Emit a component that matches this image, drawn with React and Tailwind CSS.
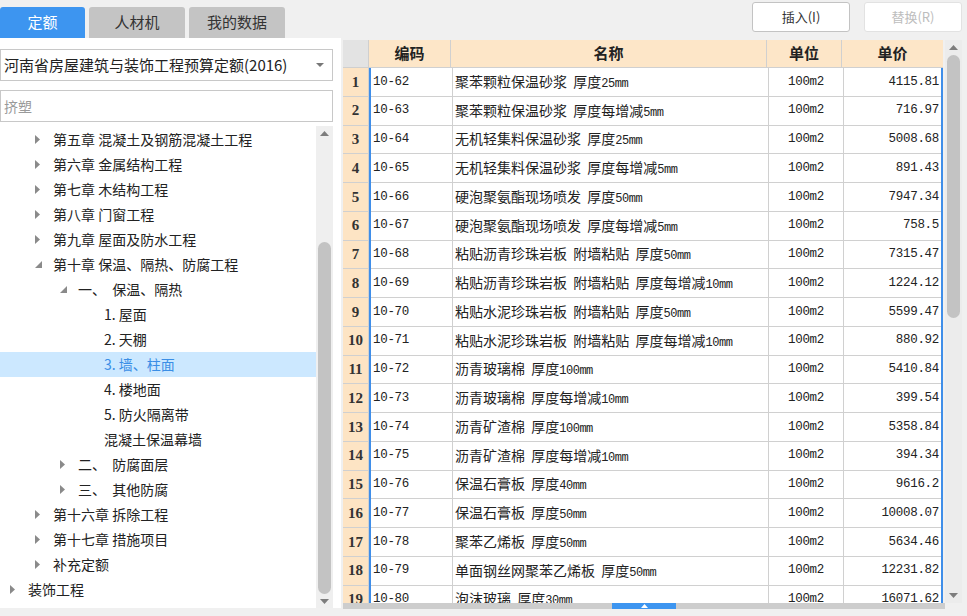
const rows = [
  ['10-62', '聚苯颗粒保温砂浆 厚度25mm', '4115.81'],
  ['10-63', '聚苯颗粒保温砂浆 厚度每增减5mm', '716.97'],
  ['10-64', '无机轻集料保温砂浆 厚度25mm', '5008.68'],
  ['10-65', '无机轻集料保温砂浆 厚度每增减5mm', '891.43'],
  ['10-66', '硬泡聚氨酯现场喷发 厚度50mm', '7947.34'],
  ['10-67', '硬泡聚氨酯现场喷发 厚度每增减5mm', '758.5'],
  ['10-68', '粘贴沥青珍珠岩板 附墙粘贴 厚度50mm', '7315.47'],
  ['10-69', '粘贴沥青珍珠岩板 附墙粘贴 厚度每增减10mm', '1224.12'],
  ['10-70', '粘贴水泥珍珠岩板 附墙粘贴 厚度50mm', '5599.47'],
  ['10-71', '粘贴水泥珍珠岩板 附墙粘贴 厚度每增减10mm', '880.92'],
  ['10-72', '沥青玻璃棉 厚度100mm', '5410.84'],
  ['10-73', '沥青玻璃棉 厚度每增减10mm', '399.54'],
  ['10-74', '沥青矿渣棉 厚度100mm', '5358.84'],
  ['10-75', '沥青矿渣棉 厚度每增减10mm', '394.34'],
  ['10-76', '保温石膏板 厚度40mm', '9616.2'],
  ['10-77', '保温石膏板 厚度50mm', '10008.07'],
  ['10-78', '聚苯乙烯板 厚度50mm', '5634.46'],
  ['10-79', '单面钢丝网聚苯乙烯板 厚度50mm', '12231.82'],
  ['10-80', '泡沫玻璃 厚度30mm', '16071.62'],
];

// level, text, arrow: 'c' collapsed, 'e' expanded, null none
const tree = [
  [1, '第五章 混凝土及钢筋混凝土工程', 'c'],
  [1, '第六章 金属结构工程', 'c'],
  [1, '第七章 木结构工程', 'c'],
  [1, '第八章 门窗工程', 'c'],
  [1, '第九章 屋面及防水工程', 'c'],
  [1, '第十章 保温、隔热、防腐工程', 'e'],
  [2, '一、  保温、隔热', 'e'],
  [3, '1. 屋面', null],
  [3, '2. 天棚', null],
  [3, '3. 墙、柱面', null, true],
  [3, '4. 楼地面', null],
  [3, '5. 防火隔离带', null],
  [3, '混凝土保温幕墙', null],
  [2, '二、  防腐面层', 'c'],
  [2, '三、  其他防腐', 'c'],
  [1, '第十六章 拆除工程', 'c'],
  [1, '第十七章 措施项目', 'c'],
  [1, '补充定额', 'c'],
  [0, '装饰工程', 'c'],
];

const indent = ['pl-[6px]', 'pl-[31px]', 'pl-[56px]', 'pl-[82px]'];

const Arrow = ({ type }) => {
  if (type === 'c')
    return (
      <svg width="5" height="9" viewBox="0 0 5 9">
        <polygon points="0,0 5,4.5 0,9" fill="#8a8a8a" />
      </svg>
    );
  if (type === 'e')
    return (
      <svg width="7" height="7" viewBox="0 0 7 7">
        <polygon points="7,0 7,7 0,7" fill="#8a8a8a" />
      </svg>
    );
  return null;
};

// ascii runs in a narrow mono face, like the grid font of the original
const Name = ({ text }) => {
  const parts = text.split(/([0-9a-z]+)/);
  return (
    <span>
      {parts.map((p, i) =>
        /^[0-9a-z]+$/.test(p) ? (
          <span key={i} className="font-['Liberation_Mono',monospace] text-[12px] tracking-[-0.5px]">{p}</span>
        ) : (
          <span key={i}>{p.replaceAll(' ', '  ')}</span>
        )
      )}
    </span>
  );
};

const ScrollArrow = ({ up }) => (
  <div className="h-[15px] flex items-center justify-center">
    <svg width="9" height="5" viewBox="0 0 9 5">
      {up ? <polygon points="0,5 4.5,0 9,5" fill="#7d7d7d" /> : <polygon points="0,0 4.5,5 9,0" fill="#7d7d7d" />}
    </svg>
  </div>
);

const App = () => {
  return (
    <div className="w-[967px] h-[616px] bg-[#f0f0f0] flex flex-col overflow-hidden font-['Noto_Sans_CJK_SC',sans-serif] text-[#222]">
      {/* top bar */}
      <div className="h-[38px] flex items-start shrink-0">
        <div className="flex items-end gap-[4px] h-full">
          <div className="w-[85px] h-[31px] bg-[#3d95f0] rounded-t-[3px] flex items-center justify-center text-white text-[15px]">定额</div>
          <div className="w-[96px] h-[31px] bg-[#c4c4c4] rounded-t-[3px] flex items-center justify-center text-[15px] text-[#333]">人材机</div>
          <div className="w-[96px] h-[31px] bg-[#c4c4c4] rounded-t-[3px] flex items-center justify-center text-[15px] text-[#333]">我的数据</div>
        </div>
        <div className="ml-auto flex gap-[14px] pt-[2px] pr-[5px]">
          <button className="w-[98px] h-[30px] bg-white border border-[#c3c3c3] rounded-[3px] text-[13px] text-[#333]">插入(I)</button>
          <button className="w-[98px] h-[30px] bg-white border border-[#e2e2e2] rounded-[3px] text-[13px] text-[#bdbdbd]">替换(R)</button>
        </div>
      </div>

      <div className="flex flex-1 min-h-0">
        {/* left panel */}
        <div className="w-[341px] h-[570px] bg-white flex flex-col shrink-0">
          <div className="pt-[11px] pr-[8px] flex flex-col gap-[9px]">
            <div className="h-[32px] border border-[#c8c8c8] flex items-center pl-[3px] pr-[8px] text-[15px] text-[#222]">
              <span>河南省房屋建筑与装饰工程预算定额(2016)</span>
              <svg className="ml-auto" width="8" height="4" viewBox="0 0 8 4">
                <polygon points="0,0 8,0 4,4" fill="#777" />
              </svg>
            </div>
            <div className="h-[32px] border border-[#c8c8c8] flex items-center pl-[3px] text-[14px] text-[#9a9a9a]">挤塑</div>
          </div>
          <div className="flex flex-1 min-h-0 mt-[4px] pr-[8px]">
            <div className="flex-1 flex flex-col pt-[1px]">
              {tree.map(([lvl, text, arrow, sel], i) => (
                <div
                  key={i}
                  className={`h-[25px] shrink-0 flex items-center ${indent[lvl]} text-[14px] whitespace-pre ${sel ? 'bg-[#cce8ff] text-[#3a8ee6]' : 'text-[#222]'}`}
                >
                  <div className="w-[22px] flex items-center pl-[4px]">
                    <Arrow type={arrow} />
                  </div>
                  <span>{text}</span>
                </div>
              ))}
            </div>
            <div className="w-[17px] bg-[#efefef] flex flex-col">
              <ScrollArrow up />
              <div className="flex-1 flex flex-col px-[2px]">
                <div className="h-[102px]" />
                <div className="h-[352px] rounded-full bg-[#c3c3c3]" />
              </div>
              <ScrollArrow />
            </div>
          </div>
        </div>

        {/* right panel */}
        <div className="ml-[2px] flex-1 flex flex-col h-[571px] pt-[2px]">
          <div className="flex flex-1 min-h-0">
            <div className="w-[600px] bg-white flex flex-col overflow-hidden">
              <div className="h-[28px] flex shrink-0 text-[15px] font-bold text-[#222]">
                <div className="w-[26px] bg-[#e3e3e3] border-r border-b border-[#cfcfcf]" />
                <div className="w-[82px] bg-[#fde6c8] border-r border-b border-[#d0d0d0] flex items-center justify-center">编码</div>
                <div className="w-[316px] bg-[#fde6c8] border-r border-b border-[#d0d0d0] flex items-center justify-center">名称</div>
                <div className="w-[75px] bg-[#fde6c8] border-r border-b border-[#d0d0d0] flex items-center justify-center">单位</div>
                <div className="w-[101px] bg-[#fde6c8] border-b border-[#d0d0d0] flex items-center justify-center">单价</div>
              </div>
              {rows.map(([code, name, price], i) => (
                <div key={code} className="h-[28.75px] shrink-0 flex">
                  <div className="w-[26px] bg-[#fde4c4] border-r border-b border-[#d0d0d0] flex items-center justify-center font-['Liberation_Serif',serif] font-bold text-[15px] text-[#333]">
                    {i + 1}
                  </div>
                  <div className="flex border-x-2 border-[#3f8ee9] w-[574px]">
                    <div className="w-[82px] border-r border-b border-[#d0d0d0] flex items-center pl-[2px] font-['Liberation_Mono',monospace] text-[12.5px] tracking-[-0.3px]">
                      {code}
                    </div>
                    <div className="w-[316px] border-r border-b border-[#d0d0d0] flex items-center pl-[2px] text-[14px] whitespace-pre">
                      <Name text={name} />
                    </div>
                    <div className="w-[75px] border-r border-b border-[#d0d0d0] flex items-center justify-center font-['Liberation_Mono',monospace] text-[12.5px] tracking-[-0.3px]">
                      100m2
                    </div>
                    <div className="flex-1 border-b border-[#d0d0d0] flex items-center justify-end pr-[2px] font-['Liberation_Mono',monospace] text-[12.5px] tracking-[-0.3px]">
                      {price}
                    </div>
                  </div>
                </div>
              ))}
            </div>
            <div className="w-[2px]" />
            <div className="w-[17px] bg-[#ececec] flex flex-col">
              <ScrollArrow up />
              <div className="flex-1 flex flex-col px-[2px]">
                <div className="h-[263px] rounded-full bg-[#c3c3c3]" />
              </div>
              <ScrollArrow />
            </div>
          </div>
          <div className="h-[6px] w-[602px] bg-[#cdcdcd] flex justify-center shrink-0">
            <div className="w-[64px] h-[6px] bg-[#3d95f0] flex items-center justify-center">
              <svg width="7" height="4" viewBox="0 0 7 4">
                <polygon points="0,4 3.5,0 7,4" fill="#fff" />
              </svg>
            </div>
          </div>
        </div>
      </div>
    </div>
  );
};

export default App;
